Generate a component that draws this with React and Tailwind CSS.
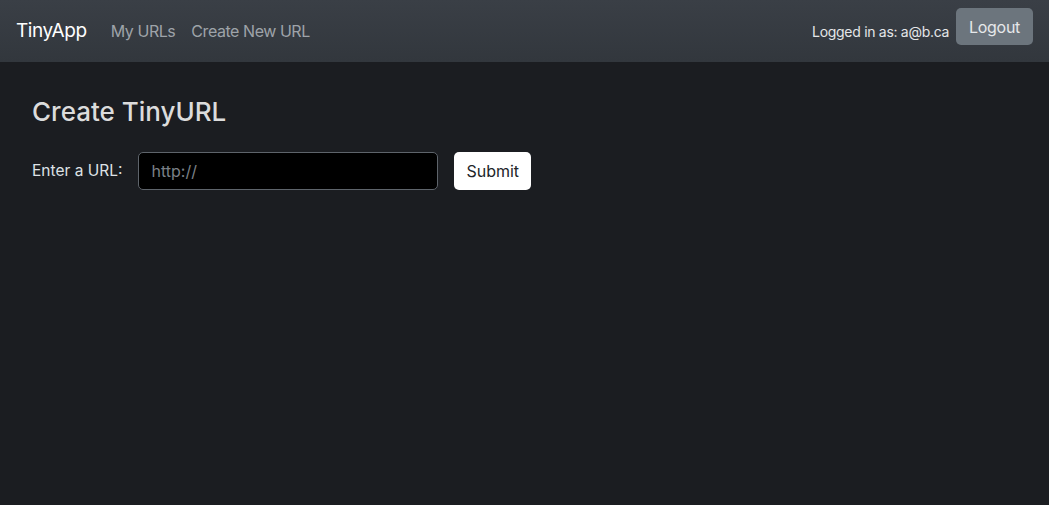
import React from 'react';

const App = () => {
    return (
        <div className="min-h-screen bg-[#1b1d21] text-[#dee2e6]" style={{ fontFamily: 'Inter, "Noto Sans", sans-serif' }}>
            {/* Navbar */}
            <nav className="h-[62px] bg-gradient-to-b from-[#3a3f46] to-[#32373d] flex items-center justify-between px-4">
                <div className="flex items-center">
                    <span className="text-[19px] tracking-[-0.4px] text-white mr-[24px]">TinyApp</span>
                    <a className="text-[16px] tracking-[-0.45px] text-[#9ea3a9] mr-4">My URLs</a>
                    <a className="text-[16px] tracking-[-0.45px] text-[#9ea3a9]">Create New URL</a>
                </div>
                <div className="flex items-center self-start mt-2">
                    <span className="text-[14px] tracking-[-0.3px] text-[#e4e6e8] mt-[10px] mr-[7px]">Logged in as: a@b.ca</span>
                    <button className="h-[37px] px-[13px] rounded-[5px] bg-[#6c757d] text-[#e6e8ea] text-[16px] tracking-[-0.3px]">Logout</button>
                </div>
            </nav>

            <main className="px-8 pt-[30px]">
                <h1 className="text-[26px] font-medium text-[#dcdcdc] mb-[21px]">Create TinyURL</h1>
                <form className="flex items-center">
                    <label className="text-[15.5px] text-[#dee2e6] mr-4">Enter a URL:</label>
                    <input
                        type="text"
                        placeholder="http://"
                        className="w-[300px] h-[38px] bg-black border border-[#5e646b] rounded-[5px] px-3 text-[16px] text-white placeholder-[#7b8087] outline-none"
                    />
                    <button type="button" className="ml-4 h-[38px] px-3 rounded-[5px] bg-white text-[#212529] text-[16px]">Submit</button>
                </form>
            </main>
        </div>
    );
};

export default App;
